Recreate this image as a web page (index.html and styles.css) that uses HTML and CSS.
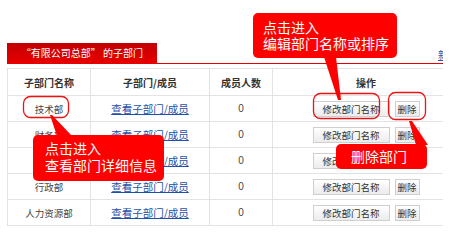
FILE: index.html
```html
<!DOCTYPE html>
<html lang="zh-CN">
<head>
<meta charset="utf-8">
<title>子部门</title>
<link rel="stylesheet" href="styles.css">
</head>
<body>
<div class="page">
  <div class="panel">
    <div class="tabbar">
      <div class="tab">“有限公司总部” 的子部门</div>
      <a class="addlink" href="#">新增子部门</a>
    </div>
    <table class="grid">
      <colgroup>
        <col class="c-name"><col class="c-sub"><col class="c-num"><col class="c-op">
      </colgroup>
      <thead>
        <tr><th>子部门名称</th><th>子部门/成员</th><th>成员人数</th><th>操作</th></tr>
      </thead>
      <tbody>
        <tr><td>技术部</td><td><a class="link" href="#">查看子部门/成员</a></td><td class="num">0</td><td class="ops"><span class="btn btn-edit">修改部门名称</span><span class="btn btn-del">删除</span></td></tr>
        <tr><td>财务部</td><td><a class="link" href="#">查看子部门/成员</a></td><td class="num">0</td><td class="ops"><span class="btn btn-edit">修改部门名称</span><span class="btn btn-del">删除</span></td></tr>
        <tr><td>网络部</td><td><a class="link" href="#">查看子部门/成员</a></td><td class="num">0</td><td class="ops"><span class="btn btn-edit">修改部门名称</span><span class="btn btn-del">删除</span></td></tr>
        <tr><td>行政部</td><td><a class="link" href="#">查看子部门/成员</a></td><td class="num">0</td><td class="ops"><span class="btn btn-edit">修改部门名称</span><span class="btn btn-del">删除</span></td></tr>
        <tr><td>人力资源部</td><td><a class="link" href="#">查看子部门/成员</a></td><td class="num">0</td><td class="ops"><span class="btn btn-edit">修改部门名称</span><span class="btn btn-del">删除</span></td></tr>
      </tbody>
    </table>
  </div>

  <svg class="marks" width="450" height="242" viewBox="0 0 450 242">
    <rect x="23.5" y="96.5" width="45" height="21" rx="7" fill="none" stroke="#ee1111" stroke-width="1.3"/>
    <rect x="313.5" y="93.5" width="66" height="25" rx="7" fill="none" stroke="#ee1111" stroke-width="1.3"/>
    <rect x="388.5" y="92.5" width="37" height="27" rx="7" fill="none" stroke="#ee1111" stroke-width="1.3"/>
    <polygon points="324,57 336,57 341,100 338,100" fill="#ff0000"/>
    <polygon points="50,115 52,115 72,136 57,136" fill="#ff0000"/>
    <polygon points="409,121 412,121 428,145 416,145" fill="#ff0000"/>
  </svg>

  <div class="callout callout-edit">点击进入<br>编辑部门名称或排序</div>
  <div class="callout callout-view">点击进入<br>查看部门详细信息</div>
  <div class="callout callout-del">删除部门</div>
</div>
</body>
</html>
```

FILE: styles.css
```css
html, body {
  margin: 0;
  padding: 0;
  background: #ffffff;
}

.page {
  position: relative;
  width: 450px;
  height: 242px;
  overflow: hidden;
  font-family: "Noto Sans CJK SC", "Noto Sans", sans-serif;
  color: #333333;
}

.panel {
  width: 436px;
  padding: 43px 0 0 7px;
  overflow: hidden;
}

.tabbar {
  display: flex;
  align-items: flex-start;
  height: 20px;
  border-bottom: 1px solid #e60000;
  white-space: nowrap;
}

.tab {
  flex: 0 0 150px;
  height: 20px;
  line-height: 20px;
  text-align: center;
  font-size: 10px;
  color: #ffffff;
  background: linear-gradient(#c20000, #e80000);
}

.addlink {
  margin-left: 281px;
  margin-top: 6px;
  font-size: 10px;
  line-height: 12px;
  color: #1f4fa8;
  text-decoration: underline;
}

.grid {
  margin-top: 4px;
  width: 452px;
  border-collapse: collapse;
  table-layout: fixed;
  font-size: 9.5px;
}

.c-name { width: 83px; }
.c-sub { width: 119px; }
.c-num { width: 63px; }
.c-op { width: 187px; }

.grid th,
.grid td {
  border: 1px solid #e3e3e3;
  padding: 0;
  text-align: center;
  vertical-align: middle;
}

.grid th {
  height: 26px;
  font-size: 10px;
  font-weight: bold;
  color: #333333;
}

.grid td {
  height: 25px;
  color: #444444;
}

.grid .num {
  font-family: "Liberation Sans", sans-serif;
  font-size: 10px;
}

.link {
  font-size: 10.5px;
  color: #1f4fa8;
  text-decoration: underline;
}

.ops {
  white-space: nowrap;
}

.btn {
  display: inline-block;
  box-sizing: border-box;
  height: 16px;
  line-height: 14px;
  font-size: 9.5px;
  color: #333333;
  text-align: center;
  vertical-align: middle;
  border: 1px solid #cfcfcf;
  background: linear-gradient(#ffffff, #ececec);
}

.btn-edit {
  width: 77px;
}

.btn-del {
  width: 25px;
  margin-left: 5px;
}

.marks {
  position: absolute;
  left: 0;
  top: 0;
}

.callout {
  position: absolute;
  box-sizing: border-box;
  background: #ff0000;
  color: #ffffff;
  border-radius: 5px;
  font-size: 14px;
  white-space: nowrap;
}

.callout-edit {
  left: 253px;
  top: 13px;
  width: 144px;
  height: 45px;
  padding: 6px 0 0 10px;
  line-height: 16px;
}

.callout-view {
  left: 33px;
  top: 135px;
  width: 131px;
  height: 46px;
  padding: 5px 0 0 12px;
  line-height: 17px;
}

.callout-del {
  left: 336px;
  top: 144px;
  width: 91px;
  height: 25px;
  padding: 0 0 0 15px;
  line-height: 25px;
}
```
